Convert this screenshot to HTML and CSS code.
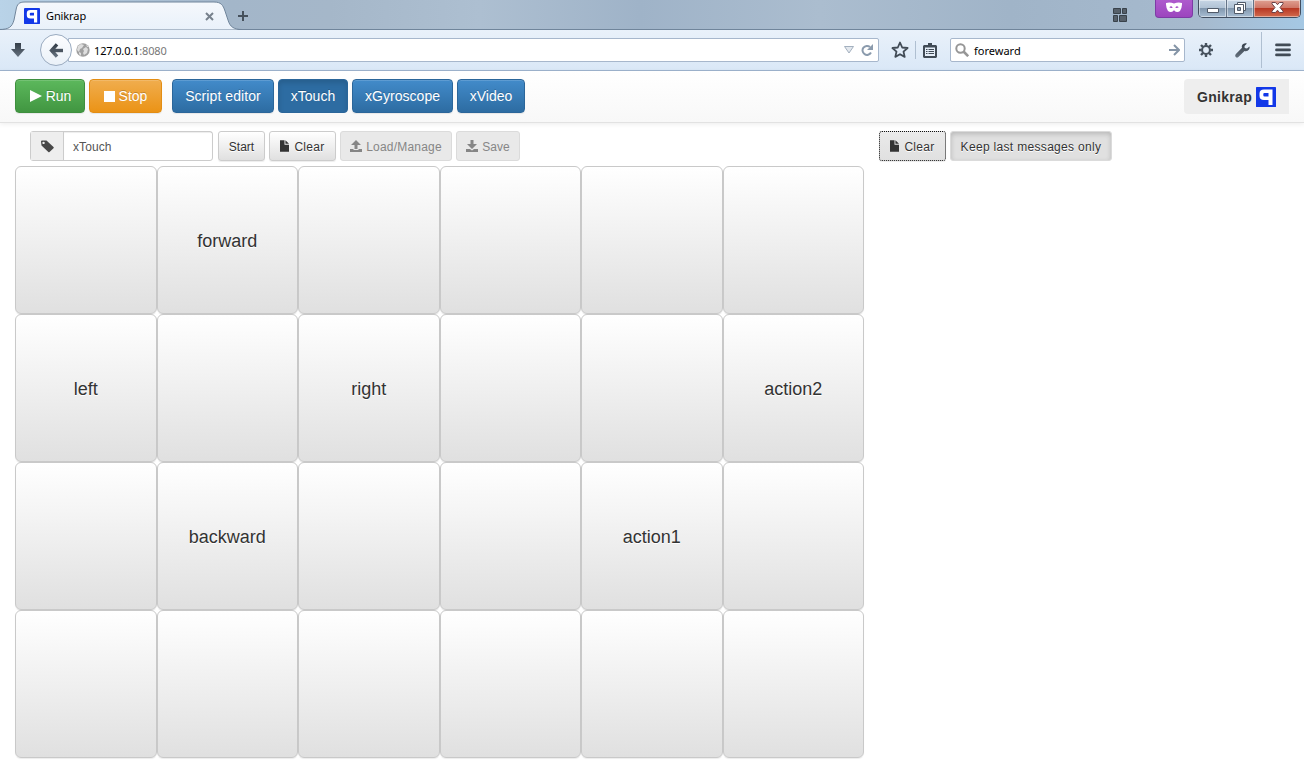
FILE: index.html
```html
<!DOCTYPE html>
<html lang="en">
<head>
<meta charset="utf-8">
<title>Gnikrap</title>
<link rel="stylesheet" href="styles.css">
</head>
<body>
<svg width="0" height="0" class="defs">
  <defs>
    <linearGradient id="steel" x1="0" y1="0" x2="0" y2="1"><stop offset="0" stop-color="#343e49"/><stop offset="1" stop-color="#66727f"/></linearGradient>
    <linearGradient id="tabfill" x1="0" y1="0" x2="0" y2="1"><stop offset="0" stop-color="#f5f8fc"/><stop offset="1" stop-color="#e9f1fa"/></linearGradient>
    <symbol id="logo" viewBox="0 0 20 20"><rect width="20" height="20" rx=".6" fill="#1238e8"/><path fill="#fff" fill-rule="evenodd" d="M8 2.500h8.500V18H12.500V13H8Q3.500 13 3.500 9V6.500Q3.500 2.500 8 2.500zM8.500 6Q7.300 6 7.300 7v1.300Q7.300 9.500 8.500 9.500H12.500V6z"/></symbol>
    <symbol id="file" viewBox="0 0 10 13"><path d="M0 0h5v5h5v8H0zM6 0l4 4H6z"/></symbol>
  </defs>
</svg>
<header class="tabstrip">
  <div class="tab">
    <svg class="tab-shape" width="242" height="30"><path fill="url(#tabfill)" stroke="#70859b" d="M-1 29.500C9 29.500 12 27 14 20L16 10C17 4 19 2 25 2H214C221 2 223 5 225 11L228 20C230 27 234 29.500 242 29.500"/></svg>
    <svg class="tab-logo" width="16" height="16"><use href="#logo"/></svg>
    <span class="tab-title">Gnikrap</span>
    <svg class="tab-close" width="9" height="9"><path stroke="#77818c" stroke-width="2" d="M1 1l7 7M8 1L1 8"/></svg>
  </div>
  <svg class="newtab" width="12" height="12"><path stroke="#46515c" stroke-width="2" d="M6 1v10M1 6h10"/></svg>
  <svg class="groups" width="14" height="14"><path fill="#56606a" stroke="#39424b" d="M.5.500h7v5h-7zM9.500.500h4v5h-4zM.500 7.500h4v6h-4zM6.500 7.500h7v6h-7z"/></svg>
  <div class="mask"><svg width="16" height="11"><path fill="#fff" fill-rule="evenodd" d="M0 1Q4-.3 8 1.600Q12-.3 16 1q.2 5-2 8-3 2.500-6-.8-3 3.300-6 .8Q-.2 6 0 1zM3.300 5.300q1.700 1.500 3.400.1-1.600-2-3.400-.1zM12.700 5.300q-1.700 1.500-3.400.1 1.600-2 3.400-.1z"/></svg></div>
  <div class="winctl">
    <div class="wc min"><svg width="12" height="5"><path fill="#fff" stroke="#505a68" d="M.500.500h11v4H.500z"/></svg></div>
    <div class="wc max"><svg width="12" height="12"><path fill="#fff" stroke="#505a68" d="M3.500.500h8v8h-8z"/><path fill="#fff" stroke="#505a68" d="M.500 2.500h9v9h-9z"/><path fill="#93a5b9" stroke="#505a68" d="M3.500 5.500h3v3h-3z"/></svg></div>
    <div class="wc close"><svg width="13" height="11"><path fill="#fff" stroke="#6b4248" d="M1 .5h3.500l2 2.200 2-2.200H12v1.300L9 5.500l3 3.700v1.300H8.500l-2-2.300-2 2.300H1V9.200l3-3.700-3-3.700z"/></svg></div>
  </div>
</header>
<nav class="chrome">
  <svg class="dl" width="14" height="14"><path fill="url(#steel)" d="M4 0h6v6h4l-7 8-7-8h4z"/></svg>
  <div class="back"><svg width="14" height="15"><path fill="none" stroke="url(#steel)" stroke-width="3.400" d="M8 1.300L2.500 7.500 8 13.700"/><path fill="#4a5561" d="M2 5.800h12v3.400H2z"/></svg></div>
  <div class="url">
    <svg width="14" height="14"><circle cx="7" cy="7" r="6.700" fill="#a0a0a0"/><path fill="#dedede" d="M2 3l3-2 3 1-2 3-2 1-1 3-2-2zM7 6l3-2 2 2-1 4-3 2-1-2 1-2zM10 1l3 3-2 0zM3 9l2 1v3l-2-2z"/></svg>
    <span class="address">127.0.0.1<i>:8080</i></span>
    <svg class="drop" width="10" height="8"><path fill="#e3e8ee" stroke="#a3b0bf" d="M.500.500h9L5 7z"/></svg>
    <svg class="reload" width="12" height="12"><path fill="none" stroke="#8b9bad" stroke-width="2" d="M10 8.500A4.500 4.500 0 1 1 9 3"/><path fill="#8b9bad" d="M12 0v6H6z"/></svg>
  </div>
  <svg class="star" width="18" height="18"><path fill="none" stroke="#414b56" stroke-width="1.800" stroke-linejoin="round" d="M9 1.500l2.200 5 5.400.5-4.100 3.600 1.200 5.300L9 13.200l-4.700 2.700 1.200-5.300L1.400 7l5.400-.5z"/></svg>
  <span class="sep"></span>
  <svg class="clip" width="14" height="15"><path fill="#414b56" d="M5 0h4v2h4l1 1v11l-1 1H1l-1-1V3l1-1h4z"/><path fill="#e5eef8" d="M2 4.500h10V13H2z"/><path stroke="#414b56" stroke-width="1" d="M3 6.500h1.500M5.500 6.500H11M3 8.500h1.500M5.500 8.500H11M3 10.500h1.500M5.500 10.500H11"/></svg>
  <div class="search">
    <svg width="14" height="14"><circle cx="5.500" cy="5.500" r="4.200" fill="none" stroke="#969696" stroke-width="2"/><path stroke="#969696" stroke-width="2.600" d="M8.500 8.500l4.700 4.700"/></svg>
    <span>foreward</span>
    <svg width="11" height="12"><path fill="none" stroke="#8595a7" stroke-width="2" d="M0 6h9.500M5 1l5 5-5 5"/></svg>
  </div>
  <svg class="gear" width="14" height="14"><circle cx="7" cy="7" r="3.900" fill="none" stroke="#46515d" stroke-width="2"/><path stroke="#46515d" stroke-width="2.400" d="M7 0v2.700M7 11.300V14M0 7h2.700M11.300 7H14M2 2l2 2M10 10l2 2M2 12l2-2M10 4l2-2"/></svg>
  <svg class="wrench" width="15" height="15"><path fill="url(#steel)" d="M14.500 3.500L12 5.500 9.700 4.900 9.500 3l2.500-2.500Q9-.500 7.300 1.800q-.9 1.500-.3 3L.7 11.300q-1 1.300 0 2.600 1.300 1.200 2.700 0L9.500 8q3 .7 4.500-1.500.9-1.500.5-3z"/></svg>
  <span class="sep tall"></span>
  <svg class="burger" width="16" height="14"><path stroke="#414b56" stroke-width="2.800" stroke-linecap="round" d="M1.500 1.900h13M1.500 6.900h13M1.500 11.900h13"/></svg>
</nav>
<div class="appbar">
  <button class="btn green run"><svg width="12" height="12"><path fill="#fff" d="M0 0l12 6-12 6z"/></svg>Run</button>
  <button class="btn orange stop"><svg width="11" height="11"><path fill="#fff" d="M0 0h11v11H0z"/></svg>Stop</button>
  <button class="btn blue script">Script editor</button>
  <button class="btn blue active touch">xTouch</button>
  <button class="btn blue gyro">xGyroscope</button>
  <button class="btn blue video">xVideo</button>
  <div class="brand">Gnikrap<svg width="20" height="20"><use href="#logo"/></svg></div>
</div>
<main class="content">
  <section class="left">
    <div class="tools">
      <div class="name"><div class="addon"><svg width="13" height="13"><path fill="#484848" fill-rule="evenodd" d="M0 1.500Q0 .5 1 .5h4.500L12.500 7q.6.600 0 1.200L8.500 12q-.6.600-1.200 0L.500 5.500zM2.500 1.700a1.200 1.200 0 1 0 .1 0z"/></svg></div><div class="field">xTouch</div></div>
      <button class="sm start">Start</button>
      <button class="sm clear"><svg width="9" height="12"><use href="#file"/></svg>Clear</button>
      <button class="sm off load"><svg width="12" height="12"><path d="M6 0l5 5H7.500v4h-3V5H1zM0 9h3.500v1h5V9H12v3H0z"/></svg>Load/Manage</button>
      <button class="sm off save"><svg width="12" height="12"><path d="M4.500 0h3v4H11L6 9 1 4h3.500zM0 9h4l2 1.500L8 9h4v3H0z"/></svg>Save</button>
    </div>
    <div class="pad">
      <button></button><button>forward</button><button></button><button></button><button></button><button></button>
      <button>left</button><button></button><button>right</button><button></button><button></button><button>action2</button>
      <button></button><button>backward</button><button></button><button></button><button>action1</button><button></button>
      <button></button><button></button><button></button><button></button><button></button><button></button>
    </div>
  </section>
  <section class="tools messages">
    <button class="sm clear focus"><svg width="9" height="12"><use href="#file"/></svg>Clear</button>
    <button class="sm pressed">Keep last messages only</button>
  </section>
</main>
</body>
</html>
```
FILE: styles.css
```css
* { box-sizing: border-box; }
body { margin: 0; width: 1304px; height: 768px; overflow: hidden; background: #fff; color: #333; font-family: "Liberation Sans", Arial, sans-serif; }
svg { display: block; flex: none; }
.defs { position: absolute; }
button { font-family: inherit; margin: 0; white-space: nowrap; }

.tabstrip { display: flex; height: 30px; align-items: flex-start; border-bottom: 1px solid #70859b; background: linear-gradient(90deg, #b9d3e8 0, #a3b6c9 230px, #a5b7c9 330px, #adbfd1 480px, #9fb3c8 640px, #abbdcf 820px, #a0b4c8 1010px, #a6bace 1200px, #a5c8e4 1304px); }
.tab { position: relative; display: flex; width: 237px; height: 30px; padding: 8px 0 0 24px; font: 11px/16px "Noto Sans", sans-serif; color: #000; }
.tab-shape { position: absolute; left: 0; top: 0; }
.tab-logo, .tab-title, .tab-close { position: relative; }
.tab-title { margin-left: 6px; width: 159px; letter-spacing: -.1px; }
.tab-close { margin-top: 4px; }
.newtab { margin-top: 10px; position: relative; }
.groups { margin: 8px 0 0 864px; }
.mask { display: flex; width: 38px; height: 18px; margin-left: 28px; padding-top: 2px; justify-content: center; border: 1px solid #7d3ba5; border-top: 0; border-radius: 0 0 4px 4px; background: linear-gradient(#ae5bcd, #9c45be); }
.winctl { display: flex; width: 103px; height: 18px; margin-left: 5px; border: 1px solid #414e60; border-top: 0; border-radius: 0 0 5px 5px; overflow: hidden; }
.wc { display: flex; justify-content: center; background: linear-gradient(#c7d6e5 0, #b1c3d5 45%, #8197ae 50%, #a8bed3 100%); box-shadow: inset 0 0 0 1px #ffffff70; }
.min { width: 28px; padding-top: 8px; border-right: 1px solid #647487; }
.max { width: 27px; padding-top: 2px; border-right: 1px solid #647487; }
.close { flex: 1; padding-top: 2px; background: linear-gradient(#dfa092 0, #cf7768 45%, #b83824 50%, #d26b4e 100%); }

.chrome { display: flex; align-items: center; height: 41px; padding: 0 13px 0 11px; border-bottom: 1px solid #9fb4cf; background: linear-gradient(#e9f1fa, #dae8f7); font: 11px/16px "Noto Sans", sans-serif; color: #000; }
.back { display: flex; position: relative; z-index: 1; align-items: center; justify-content: center; width: 32px; height: 32px; margin-left: 15px; border: 1px solid #9aabc0; border-radius: 50%; background: linear-gradient(#fcfdff, #eaf1f8); }
.url { display: flex; align-items: center; width: 811px; height: 24px; margin-left: -4px; padding-left: 7px; border: 1px solid #a7b7cc; border-radius: 0 2px 2px 0; background: #fff; }
.address { width: 750px; margin-left: 4px; letter-spacing: -.15px; padding-top: 1px; }
.address i { font-style: normal; color: #777; }
.reload { margin-left: 7px; }
.star { margin-left: 12px; }
.sep { width: 1px; height: 18px; margin-left: 6px; background: #afbfd1; }
.clip { margin-left: 7px; }
.search { display: flex; align-items: center; width: 235px; height: 24px; margin-left: 13px; padding-left: 4px; border: 1px solid #a7b7cc; border-radius: 2px; background: #fff; }
.search span { width: 195px; margin-left: 5px; padding-top: 1px; }
.gear { margin-left: 14px; }
.wrench { margin-left: 22px; }
.tall { height: 36px; margin-left: 11px; }
.burger { margin-left: 13px; }

.appbar { display: flex; gap: 4px; height: 52px; padding: 8px 15px 0; border-bottom: 1px solid #e2e2e2; background: linear-gradient(#fff, #f8f8f8); box-shadow: 0 1px 5px rgba(0,0,0,.08); }
.btn { display: flex; align-items: center; justify-content: center; height: 34px; padding: 0; border: 1px solid; border-radius: 4px; font-size: 14px; color: #fff; text-shadow: 0 -1px 0 rgba(0,0,0,.2); box-shadow: inset 0 1px 0 rgba(255,255,255,.15), 0 1px 1px rgba(0,0,0,.075); }
.btn svg { margin-right: 4px; }
.run svg { margin-left: 1px; }
.green { border-color: #3e8f3e; background: linear-gradient(#5cb85c, #419641); }
.orange { border-color: #e38d13; background: linear-gradient(#f0ad4e, #eb9316); }
.blue { border-color: #2b669a; background: linear-gradient(#428bca, #2d6ca2); }
.blue.active { background: #2d6ca2; box-shadow: inset 0 3px 5px rgba(0,0,0,.125); }
.run { width: 70px; }
.stop { width: 73px; }
.script { width: 102px; margin-left: 6px; letter-spacing: .08px; }
.touch { width: 70px; }
.gyro { width: 101px; letter-spacing: .05px; }
.video { width: 68px; }
.brand { display: flex; align-items: center; width: 105px; height: 35px; margin-left: auto; padding-left: 13px; border-radius: 4px 0 0 4px; background: #eee; font-size: 14px; line-height: 16px; font-weight: bold; letter-spacing: .3px; }
.brand svg { margin-left: 4px; }

.content { display: flex; padding: 8px 0 0 15px; }
.left { width: 849px; }
.tools { display: flex; gap: 4px; height: 35px; }
.left .tools { padding-left: 15px; }
.name { display: flex; width: 183px; height: 30px; margin-right: 1px; border: 1px solid #ccc; border-radius: 3px; font-size: 12px; line-height: 30px; color: #555; }
.addon { display: flex; width: 33px; align-items: center; justify-content: center; border-right: 1px solid #ccc; background: #eee; }
.field { flex: 1; padding-left: 9px; box-shadow: inset 0 1px 1px rgba(0,0,0,.075); letter-spacing: .1px; }
.sm { display: flex; align-items: center; justify-content: center; height: 30px; padding: 1px 0 0; border: 1px solid #ccc; border-radius: 3px; background: linear-gradient(#fff, #e0e0e0); color: #333; fill: #333; font-size: 12px; text-shadow: 0 1px 0 #fff; box-shadow: inset 0 1px 0 rgba(255,255,255,.15), 0 1px 1px rgba(0,0,0,.075); }
.sm svg { margin: -1px 4px 0 0; }
.start { width: 47px; }
.clear { width: 67px; letter-spacing: .3px; }
.clear svg { margin-right: 5px; }
.off { border-color: #dbdbdb; background: #e9e9e9; color: #868686; fill: #868686; box-shadow: none; text-shadow: none; }
.load { width: 112px; letter-spacing: .2px; }
.save { width: 64px; }
.focus { border: 1px dotted #111; background: linear-gradient(#eaeaea, #e0e0e0); }
.messages { margin-left: 15px; }
.pressed { width: 162px; border-color: #dbdbdb; background: #e0e0e0; box-shadow: inset 0 2px 5px rgba(0,0,0,.18); letter-spacing: .32px; }
.pad { display: grid; grid-template-columns: repeat(6, 1fr); grid-auto-rows: 148px; }
.pad button { padding: 2px 0 0; border: 1px solid #c9c9c9; border-radius: 6px; background: linear-gradient(#fff, #e0e0e0); color: #333; font-size: 18px; text-shadow: 0 1px 0 #fff; box-shadow: 0 1px 1px rgba(0,0,0,.075); }
```
